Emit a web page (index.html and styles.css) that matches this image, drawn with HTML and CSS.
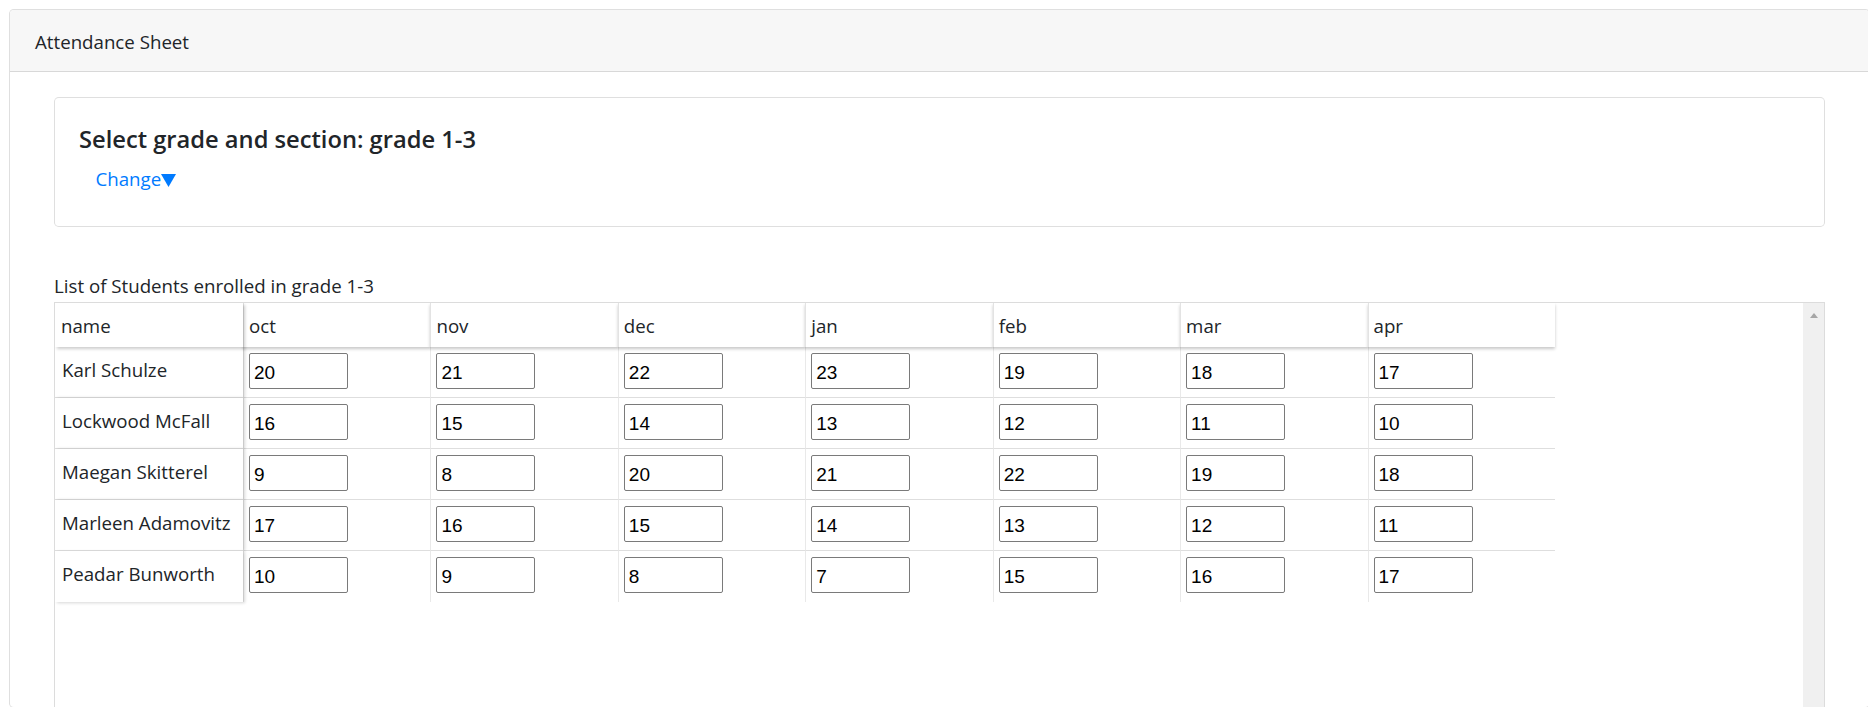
FILE: index.html
```html
<!DOCTYPE html>
<html lang="en">
<head>
<meta charset="utf-8">
<title>Attendance Sheet</title>
<link rel="stylesheet" href="styles.css">
</head>
<body>
<div class="page">
  <div class="card outer-card">
    <div class="card-header">Attendance Sheet</div>
    <div class="outer-body">
      <div class="card select-card">
        <h5 class="card-title">Select grade and section: grade 1-3</h5>
        <button class="btn-link" type="button">Change<svg class="caret" width="15" height="13" viewBox="0 0 15 13"><path d="M0 0H15L7.5 13Z" fill="#007bff"/></svg></button>
      </div>
      <div class="list-label">List of Students enrolled in grade 1-3</div>
      <div class="grid-wrap">
        <div class="grid-scroll">
          <table class="grid">
            <colgroup><col class="col-name"><col><col><col><col><col><col><col></colgroup>
            <thead>
              <tr><th class="name-col">name</th><th>oct</th><th>nov</th><th>dec</th><th>jan</th><th>feb</th><th>mar</th><th>apr</th></tr>
            </thead>
            <tbody>
              <tr><td class="name-col">Karl Schulze</td><td><input class="cell-input" value="20"></td><td><input class="cell-input" value="21"></td><td><input class="cell-input" value="22"></td><td><input class="cell-input" value="23"></td><td><input class="cell-input" value="19"></td><td><input class="cell-input" value="18"></td><td><input class="cell-input" value="17"></td></tr>
              <tr><td class="name-col">Lockwood McFall</td><td><input class="cell-input" value="16"></td><td><input class="cell-input" value="15"></td><td><input class="cell-input" value="14"></td><td><input class="cell-input" value="13"></td><td><input class="cell-input" value="12"></td><td><input class="cell-input" value="11"></td><td><input class="cell-input" value="10"></td></tr>
              <tr><td class="name-col">Maegan Skitterel</td><td><input class="cell-input" value="9"></td><td><input class="cell-input" value="8"></td><td><input class="cell-input" value="20"></td><td><input class="cell-input" value="21"></td><td><input class="cell-input" value="22"></td><td><input class="cell-input" value="19"></td><td><input class="cell-input" value="18"></td></tr>
              <tr><td class="name-col">Marleen Adamovitz</td><td><input class="cell-input" value="17"></td><td><input class="cell-input" value="16"></td><td><input class="cell-input" value="15"></td><td><input class="cell-input" value="14"></td><td><input class="cell-input" value="13"></td><td><input class="cell-input" value="12"></td><td><input class="cell-input" value="11"></td></tr>
              <tr class="last-row"><td class="name-col">Peadar Bunworth</td><td><input class="cell-input" value="10"></td><td><input class="cell-input" value="9"></td><td><input class="cell-input" value="8"></td><td><input class="cell-input" value="7"></td><td><input class="cell-input" value="15"></td><td><input class="cell-input" value="16"></td><td><input class="cell-input" value="17"></td></tr>
            </tbody>
          </table>
        </div>
        <div class="vscroll"><span class="arrow-up"></span></div>
      </div>
    </div>
  </div>
</div>
</body>
</html>
```
FILE: styles.css
```css
html, body {
  margin: 0;
  padding: 0;
  overflow: hidden;
  background: #fff;
}
body {
  font-family: "Open Sans", "Noto Sans", sans-serif;
  font-size: 18.7px;
  line-height: 28px;
  color: #212529;
}
.page {
  padding: 9px 0 0 9px;
}
.card {
  box-sizing: border-box;
  border: 1px solid rgba(0, 0, 0, 0.125);
  border-radius: 4.75px;
  background: #fff;
}
.outer-card {
  width: 1861px;
  height: 699px;
  overflow: hidden;
}
.card-header {
  padding: 18px 25px 15px;
  background: #f7f7f7;
  border-bottom: 1px solid rgba(0, 0, 0, 0.125);
  border-radius: 4px 4px 0 0;
}
.outer-body {
  padding: 25px 44px 0;
}
.select-card {
  padding: 27px 24px 33px;
}
.card-title {
  margin: 0 0 11.4px;
  font-size: 23.7px;
  line-height: 28.4px;
  font-weight: 600;
}
.btn-link {
  display: inline-block;
  margin: 0;
  padding: 0 0 0 16.5px;
  border: 0;
  background: none;
  font: inherit;
  line-height: 28px;
  color: #007bff;
  cursor: pointer;
}
.caret {
  vertical-align: -1px;
}
.list-label {
  margin-top: 45px;
}
.grid-wrap {
  display: flex;
  margin-top: 2.5px;
  height: 420px;
  border: 1px solid #dcdcdc;
}
.grid-scroll {
  flex: 1;
  overflow: hidden;
}
.vscroll {
  width: 21px;
  background: #f0f0f0;
  display: flex;
  justify-content: center;
}
.arrow-up {
  margin-top: 10px;
  width: 0;
  height: 0;
  border-left: 4px solid transparent;
  border-right: 4px solid transparent;
  border-bottom: 5px solid #a6a6a6;
}
.grid {
  table-layout: fixed;
  width: 1500px;
  border-collapse: separate;
  border-spacing: 0;
}
.col-name {
  width: 188px;
}
.grid th {
  position: sticky;
  top: 0;
  z-index: 2;
  box-sizing: border-box;
  height: 44px;
  padding: 9px 5px 7px;
  text-align: left;
  vertical-align: top;
  font-weight: 400;
  background: #fff;
  border-left: 1px solid #e3e3e3;
  box-shadow: 0 2px 3px rgba(0, 0, 0, 0.22);
}
.grid th.name-col {
  left: 0;
  z-index: 3;
  padding-left: 6px;
  border-left: 0;
  box-shadow: 2px 2px 3px rgba(0, 0, 0, 0.2);
}
.grid td {
  box-sizing: border-box;
  height: 51px;
  padding: 6px 5px 0;
  vertical-align: top;
  border-left: 1px solid #e9e9e9;
  border-bottom: 1px solid #dedede;
}
.grid td.name-col {
  position: sticky;
  left: 0;
  z-index: 1;
  padding: 9px 6px 0 7px;
  background: #fff;
  border-left: 0;
  white-space: nowrap;
  box-shadow: 2px 0 3px rgba(0, 0, 0, 0.16);
}
.grid .last-row td {
  border-bottom: 0;
}
.grid .last-row td.name-col {
  box-shadow: 2px 1px 3px rgba(0, 0, 0, 0.16);
}
.cell-input {
  box-sizing: border-box;
  display: block;
  width: 99px;
  height: 36px;
  margin: 0;
  padding: 3px 4px 0;
  border: 1px solid #7a7a7a;
  border-radius: 2px;
  font-family: "Liberation Sans", Arial, sans-serif;
  font-size: 19px;
  color: #000;
  background: #fff;
}
```
